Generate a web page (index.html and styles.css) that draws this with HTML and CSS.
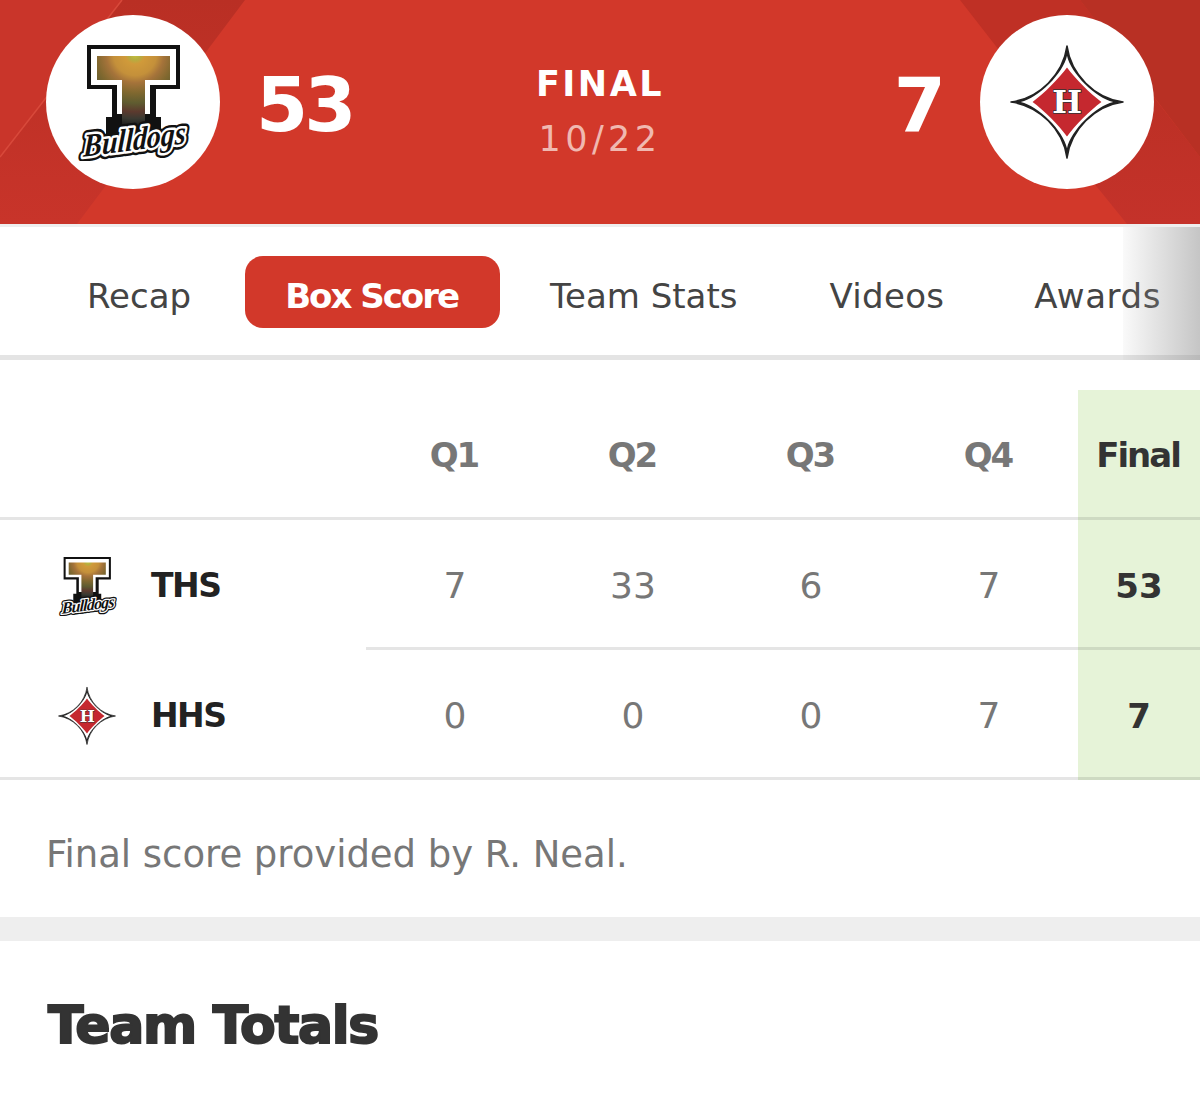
FILE: index.html
```html
<!DOCTYPE html>
<html lang="en">
<head>
    <meta charset="UTF-8">
    <meta name="viewport" content="width=device-width, initial-scale=1.0">
    <title>Box Score</title>
    <link rel="stylesheet" href="styles.css">
</head>
<body>
    <!-- Logo symbols, drawn in the coordinates of the large header logos -->
    <svg class="defs" width="0" height="0">
        <defs>
            <radialGradient id="tFill" gradientUnits="userSpaceOnUse" cx="135" cy="55" r="72">
                <stop offset="0" stop-color="#c9c23e"/>
                <stop offset="0.08" stop-color="#b5ae40"/>
                <stop offset="0.14" stop-color="#d09a3a"/>
                <stop offset="0.3" stop-color="#c4903a"/>
                <stop offset="0.4" stop-color="#a5733a"/>
                <stop offset="0.54" stop-color="#80682f"/>
                <stop offset="0.68" stop-color="#5f5c30"/>
                <stop offset="0.8" stop-color="#5c3a2e"/>
                <stop offset="0.9" stop-color="#3a3a32"/>
                <stop offset="1" stop-color="#1c1c1c"/>
            </radialGradient>
            <linearGradient id="bandLeft" x1="0" y1="0" x2="0" y2="1">
                <stop offset="0" stop-color="#b92f24"/>
                <stop offset="1" stop-color="#c8342a"/>
            </linearGradient>
            <linearGradient id="bandRight" x1="0" y1="0" x2="0" y2="1">
                <stop offset="0" stop-color="#bc3025"/>
                <stop offset="1" stop-color="#c4322a"/>
            </linearGradient>
            <symbol id="logoT" viewBox="74 44 118 118">
                <polygon fill="#111" points="87,46 180,46 180,90 156,90 156,118 161,118 161,153 106,153 106,118 112,118 112,90 87,90"/>
                <polygon fill="#fff" points="91,50 176,50 176,86 150,86 150,115 117,115 117,86 91,86"/>
                <polygon fill="url(#tFill)" points="97,57 170,57 170,81 145,81 145,127 122,127 122,81 97,81"/>
                <g transform="rotate(-7.5 133 142)" class="bulldogs">
                    <g transform="translate(133 151) skewX(-10)">
                        <text class="bulldogs-outer" text-anchor="middle" textLength="103" lengthAdjust="spacingAndGlyphs">Bulldogs</text>
                        <text class="bulldogs-mid" text-anchor="middle" textLength="103" lengthAdjust="spacingAndGlyphs">Bulldogs</text>
                        <text class="bulldogs-top" text-anchor="middle" textLength="103" lengthAdjust="spacingAndGlyphs">Bulldogs</text>
                    </g>
                </g>
            </symbol>
            <symbol id="logoH" viewBox="1007 42 120 120">
                <path fill="#222" stroke="#222" stroke-width="1.5" stroke-linejoin="round" stroke-linecap="round" d="M1067 45C1071 74 1095 98 1124 102C1095 106 1071 130 1067 159C1063 130 1039 106 1010 102C1039 98 1063 74 1067 45Z"/>
                <path fill="#fff" d="M1067 55C1071 73 1096 98 1114 102C1096 106 1071 131 1067 149C1063 131 1038 106 1020 102C1038 98 1063 73 1067 55Z"/>
                <path fill="#c5282f" d="M1067 67C1075 78 1091 94 1102 102C1091 110 1075 126 1067 137C1059 126 1043 110 1032 102C1043 94 1059 78 1067 67Z"/>
                <text class="h-letter" x="1067" y="113.5" text-anchor="middle">H</text>
            </symbol>
        </defs>
    </svg>

    <!-- Score header -->
    <header class="hero">
        <svg class="hero-bg" viewBox="0 0 1200 224" preserveAspectRatio="none">
            <polygon fill="url(#bandLeft)" points="122,0 245,0 77,224 0,224 0,157"/>
            <polygon fill="#c9352a" points="0,0 122,0 0,157"/>
            <line x1="122" y1="0" x2="0" y2="157" stroke="#d8493b" stroke-width="1.5"/>
            <polygon fill="#bf3025" points="960,0 1080,0 1153,96 1097,187 1030,90"/>
            <polygon fill="url(#bandRight)" points="1097,187 1153,96 1200,157 1200,224 1127,224"/>
            <polygon fill="#b83024" points="1080,0 1200,0 1200,157"/>
        </svg>
        <div class="team-side">
            <div class="logo-circle"><svg class="logo-lg"><use href="#logoT"/></svg></div>
            <div class="score">53</div>
        </div>
        <div class="status">
            <div class="status-title">FINAL</div>
            <div class="status-date">10/22</div>
        </div>
        <div class="team-side">
            <div class="score">7</div>
            <div class="logo-circle"><svg class="logo-lg"><use href="#logoH"/></svg></div>
        </div>
    </header>

    <!-- Tabs -->
    <nav class="tabs">
        <a href="#" class="tab tab-recap">Recap</a>
        <a href="#" class="tab tab-active">Box Score</a>
        <a href="#" class="tab tab-stats">Team Stats</a>
        <a href="#" class="tab tab-videos">Videos</a>
        <a href="#" class="tab tab-awards">Awards</a>
    </nav>

    <!-- Box score table -->
    <table class="box">
        <thead>
            <tr>
                <th class="team-col"></th>
                <th>Q1</th>
                <th>Q2</th>
                <th>Q3</th>
                <th>Q4</th>
                <th class="final-col">Final</th>
            </tr>
        </thead>
        <tbody>
            <tr class="row-first">
                <td class="team-col"><div class="team-cell"><svg class="logo-sm"><use href="#logoT"/></svg><span>THS</span></div></td>
                <td>7</td>
                <td>33</td>
                <td>6</td>
                <td>7</td>
                <td class="final-col">53</td>
            </tr>
            <tr>
                <td class="team-col"><div class="team-cell"><svg class="logo-sm"><use href="#logoH"/></svg><span>HHS</span></div></td>
                <td>0</td>
                <td>0</td>
                <td>0</td>
                <td>7</td>
                <td class="final-col">7</td>
            </tr>
        </tbody>
    </table>

    <p class="note">Final score provided by R. Neal.</p>
    <div class="divider"></div>
    <h2 class="section-title">Team Totals</h2>
</body>
</html>
```

FILE: styles.css
```css
body {
    font-family: "DejaVu Sans", sans-serif;
    margin: 0;
    padding: 0;
    background-color: #fff;
    color: #333;
}
.defs {
    display: block;
}
.hero {
    position: relative;
    height: 224px;
    background-color: #d2382a;
    display: flex;
    justify-content: space-between;
    align-items: flex-start;
    padding: 15px 46px 0;
    box-sizing: border-box;
}
.hero-bg {
    position: absolute;
    top: 0;
    left: 0;
    width: 100%;
    height: 100%;
}
.team-side {
    position: relative;
    display: flex;
    align-items: center;
    gap: 37px;
}
.logo-circle {
    width: 174px;
    height: 174px;
    border-radius: 50%;
    background-color: #fff;
    display: flex;
    align-items: center;
    justify-content: center;
}
.logo-lg {
    width: 118px;
    height: 118px;
}
.score {
    margin: 0 1px 0 -1px;
    padding-top: 6px;
    font-size: 75px;
    font-weight: bold;
    letter-spacing: -4px;
    color: #fff;
}
.status {
    position: absolute;
    top: 61px;
    left: 0;
    right: 0;
    text-align: center;
    color: #fff;
}
.status-title {
    font-size: 35px;
    font-weight: bold;
    letter-spacing: 2.5px;
    line-height: 46px;
}
.status-date {
    margin-top: 11px;
    font-size: 35px;
    letter-spacing: 4.4px;
    line-height: 42px;
    color: #f0b8b0;
}
.tabs {
    position: relative;
    height: 136px;
    box-sizing: border-box;
    border-top: 3px solid #eee;
    border-bottom: 5px solid #e4e4e4;
    display: flex;
    align-items: center;
    font-size: 34px;
}
.tabs::after {
    content: "";
    position: absolute;
    top: 0;
    right: 0;
    bottom: -5px;
    width: 77px;
    background: linear-gradient(to right, rgba(150, 150, 150, 0.05), rgba(150, 150, 150, 0.55));
}
.tab {
    padding-top: 10px;
    color: #444;
    text-decoration: none;
}
.tab-recap {
    margin-left: 87px;
}
.tab-active {
    margin: 2px 0 0 54px;
    padding: 8px 42px 0 40px;
    box-sizing: border-box;
    height: 72px;
    line-height: 64px;
    border-radius: 18px;
    background-color: #d2382a;
    color: #fff;
    font-weight: bold;
    letter-spacing: -2px;
}
.tab-stats {
    margin-left: 50px;
}
.tab-videos {
    margin-left: 92px;
    letter-spacing: 0.3px;
}
.tab-awards {
    margin-left: 90px;
    letter-spacing: 0.6px;
}
.box {
    width: 1200px;
    margin-top: 30px;
    border-collapse: separate;
    border-spacing: 0;
    table-layout: fixed;
}
.box th, .box td {
    width: 178px;
    box-sizing: border-box;
    text-align: center;
    font-size: 36px;
    color: #777;
    border-bottom: 3px solid rgba(0, 0, 0, 0.1);
}
.box th {
    height: 130px;
    padding: 3px 2px 0 0;
    font-size: 34px;
    font-weight: bold;
    letter-spacing: -2px;
}
.box td {
    height: 130px;
    padding: 4px 0 0;
}
.box .team-col {
    width: 366px;
    text-align: left;
}
.box .final-col {
    width: 122px;
    background-color: #e6f3d8;
    color: #333;
    font-size: 34px;
    font-weight: bold;
}
.box .row-first .team-col {
    border-bottom-color: transparent;
}
.team-cell {
    display: flex;
    align-items: center;
    gap: 34px;
    padding-left: 57px;
    color: #222;
    font-weight: bold;
    font-size: 33px;
    letter-spacing: -1.5px;
}
.logo-sm {
    width: 60px;
    height: 60px;
}
.note {
    margin: 0;
    padding: 50px 46px 37px;
    font-size: 37px;
    line-height: 50px;
    letter-spacing: -0.03px;
    color: #777;
}
.divider {
    height: 24px;
    background-color: #eee;
}
.section-title {
    margin: 54px 48px 0;
    font-size: 52px;
    line-height: 60px;
    letter-spacing: -1.3px;
    color: #333;
    -webkit-text-stroke: 2px #333;
}
.bulldogs text {
    font-family: "Liberation Serif", serif;
    font-style: italic;
    font-weight: bold;
    font-size: 32px;
}
.bulldogs-outer {
    fill: #111;
    stroke: #111;
    stroke-width: 10px;
    stroke-linejoin: round;
}
.bulldogs-mid {
    fill: #fff;
    stroke: #fff;
    stroke-width: 5px;
    stroke-linejoin: round;
}
.bulldogs-top {
    fill: #111;
}
.h-letter {
    font-family: "DejaVu Serif", serif;
    font-weight: bold;
    font-size: 32px;
    fill: #fff;
    stroke: #333;
    stroke-width: 1.5px;
    paint-order: stroke;
}
```
